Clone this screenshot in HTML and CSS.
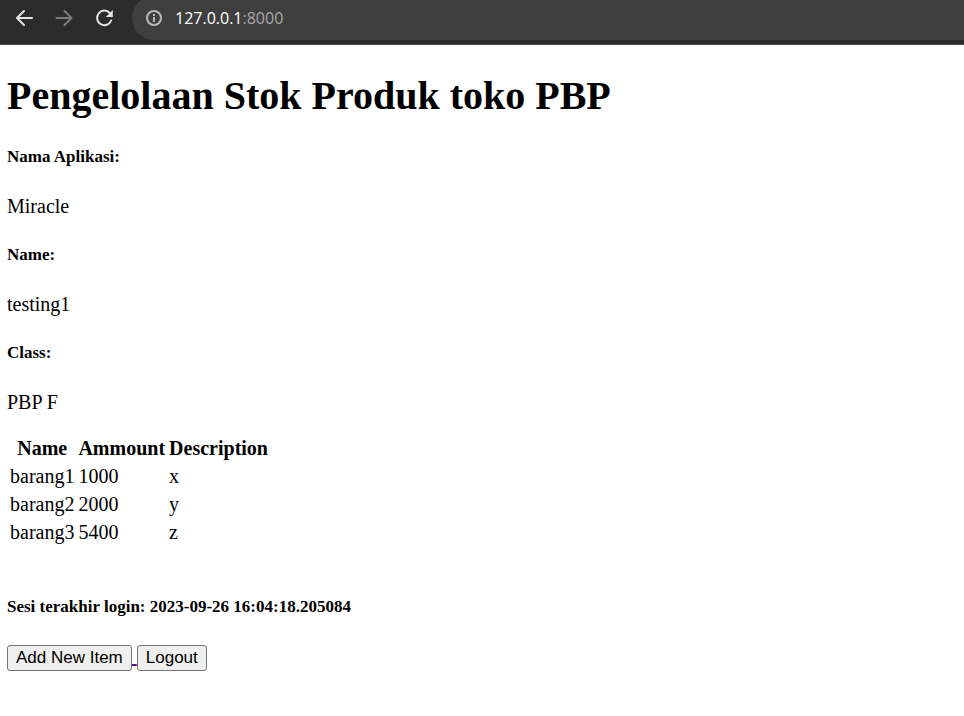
FILE: index.html
```html
<!DOCTYPE html>
<html lang="id">
<head>
<meta charset="utf-8">
<title>Pengelolaan Stok Produk</title>
<link rel="stylesheet" href="styles.css">
</head>
<body>
<header class="toolbar">
  <button class="nav" type="button" aria-label="Back"><svg viewBox="0 0 20 20"><path d="M18 10H3.500M10 3L3 10L10 17"/></svg></button>
  <button class="nav nav-off" type="button" aria-label="Forward"><svg viewBox="0 0 20 20"><path d="M2.500 10H17M10.500 3L17.500 10L10.500 17"/></svg></button>
  <button class="nav" type="button" aria-label="Reload"><svg viewBox="0 0 20 20"><path d="M17.200 12.500A7.300 7.300 0 1 1 15.800 5"/><path class="tip" d="M18.800 2V9H11.800Z"/></svg></button>
  <div class="address">
    <svg class="info" viewBox="0 0 16 16"><circle cx="8" cy="8" r="7"/><path d="M8 7V12M8 4V6"/></svg>
    <span>127.0.0.1<span class="port">:8000</span></span>
  </div>
</header>
<main>
  <h1>Pengelolaan Stok Produk toko PBP</h1>
  <h5>Nama Aplikasi:</h5>
  <p>Miracle</p>
  <h5>Name:</h5>
  <p>testing1</p>
  <h5>Class:</h5>
  <p>PBP F</p>
  <table>
    <tr><th>Name</th><th>Ammount</th><th>Description</th></tr>
    <tr><td>barang1</td><td>1000</td><td>x</td></tr>
    <tr><td>barang2</td><td>2000</td><td>y</td></tr>
    <tr><td>barang3</td><td>5400</td><td>z</td></tr>
  </table>
  <h5 class="session">Sesi terakhir login: 2023-09-26 16:04:18.205084</h5>
  <div class="actions"><a href="#add"><button type="button">Add New Item</button> </a><a href="#logout"><button type="button">Logout</button></a></div>
</main>
</body>
</html>
```
FILE: styles.css
```css
body {
  margin: 0;
  background: #fff;
  color: #000;
  font: 20px/22px "Liberation Serif", "Times New Roman", serif;
}

.toolbar {
  display: flex;
  align-items: center;
  box-sizing: border-box;
  height: 45px;
  padding: 0 0 8px 14px;
  border-bottom: 1px solid #505050;
  background: #2c2c2c;
}

.nav {
  width: 20px;
  height: 20px;
  margin-right: 20px;
  padding: 0;
  border: 0;
  background: none;
  color: #e3e3e3;
}

.nav-off {
  color: #7b7b7b;
}

svg {
  display: block;
  fill: none;
  stroke: currentColor;
  stroke-width: 2;
  stroke-linecap: round;
  stroke-linejoin: round;
}

.tip {
  fill: currentColor;
  stroke: none;
}

.address {
  display: flex;
  flex: 1;
  align-items: center;
  gap: 13px;
  height: 44px;
  margin-left: -2px;
  padding-left: 14px;
  border-radius: 22px 0 0 22px;
  background: #3f3f3f;
  color: #fff;
  font: 16px/20px "Open Sans", "Segoe UI", sans-serif;
}

.info {
  width: 16px;
  height: 16px;
  stroke-linecap: butt;
  color: #b8bbbe;
}

.port {
  color: #a8a8a8;
}

main {
  padding: 0 7px;
}

h1 {
  margin: 28px 0;
  font-size: 40px;
  line-height: 46px;
}

h5 {
  margin: 29px 0;
  font-size: 17px;
  line-height: 18px;
}

p {
  margin: 20px 0;
}

table {
  border-spacing: 2px;
}

th,
td {
  padding: 2px 1px;
}

.session {
  margin-top: 51px;
}

a {
  color: #551a8b;
  text-decoration-thickness: 2px;
}

.actions button {
  height: 26px;
  padding: 0 8px;
  border: 1px solid #767676;
  border-radius: 3px;
  background: #efefef;
  color: #000;
  font: 17px/20px "Liberation Sans", Arial, sans-serif;
}
```
